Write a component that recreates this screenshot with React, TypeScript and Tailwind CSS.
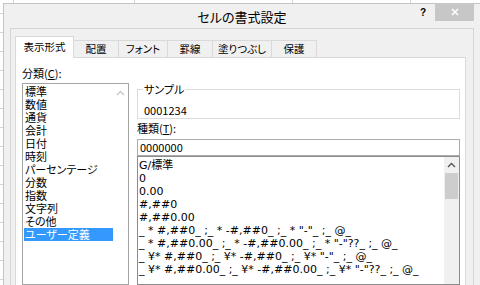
import React from "react";

const categories = [
  "標準",
  "数値",
  "通貨",
  "会計",
  "日付",
  "時刻",
  "パーセンテージ",
  "分数",
  "指数",
  "文字列",
  "その他",
  "ユーザー定義",
];

const formats = [
  "G/標準",
  "0",
  "0.00",
  "#,##0",
  "#,##0.00",
  '_ * #,##0_ ;_ * -#,##0_ ;_ * "-"_ ;_ @_',
  '_ * #,##0.00_ ;_ * -#,##0.00_ ;_ * "-"??_ ;_ @_',
  '_ ¥* #,##0_ ;_ ¥* -#,##0_ ;_ ¥* "-"_ ;_ @_',
  '_ ¥* #,##0.00_ ;_ ¥* -#,##0.00_ ;_ ¥* "-"??_ ;_ @_',
];

function ChevronUp({ color }: { color: string }) {
  return (
    <svg width="9" height="6" viewBox="0 0 9 6">
      <path d="M1 5 L4.5 1.5 L8 5" fill="none" stroke={color} strokeWidth="1.4" />
    </svg>
  );
}

const tabs = [
  { label: "配置", w: "w-[45px]" },
  { label: "フォント", w: "w-[49px]" },
  { label: "罫線", w: "w-[45px]" },
  { label: "塗りつぶし", w: "w-[59px]" },
  { label: "保護", w: "w-[45px]" },
];

export default function App() {
  const sheetRows = Array.from({ length: 15 });
  return (
    <div className="w-[480px] h-[285px] overflow-hidden bg-white flex flex-col text-black font-['Noto_Sans_CJK_JP',sans-serif] [font-feature-settings:'palt']">
      {/* sheet behind, top strip */}
      <div className="h-[3px] shrink-0 flex">
        <div className="w-[14px] border-r border-[#d4d4d4]" />
        <div className="w-[121px] border-r border-[#d4d4d4]" />
        <div className="w-[158px] border-r border-[#d4d4d4]" />
        <div className="w-[118px] border-r border-[#d4d4d4]" />
      </div>
      <div className="flex flex-1 min-h-0">
        {/* sheet behind, left strip */}
        <div className="w-[3px] shrink-0 flex flex-col">
          <div className="h-[11px] shrink-0 border-b border-[#d4d4d4]" />
          {sheetRows.map((_, i) => (
            <div key={i} className="h-[19px] shrink-0 border-b border-[#d4d4d4]" />
          ))}
        </div>

        {/* dialog */}
        <div className="flex-1 flex flex-col bg-[#f0f0f0] border-l border-t border-[#c4c4c4]">
          {/* title bar */}
          <div className="h-[24px] shrink-0 grid grid-cols-[1fr_auto_1fr]">
            <div />
            <div className="text-[13px] leading-[24px] pt-[1px] text-black">セルの書式設定</div>
            <div className="flex justify-end items-start pr-[6px]">
              <span className="font-['Liberation_Sans',sans-serif] font-bold text-[10px] leading-[12px] mt-[3px] mr-[9px]">?</span>
              <div className="w-[39px] h-[18px] -mt-[1px] bg-[#c7c7c7] flex items-center justify-center">
                <svg width="8" height="8" viewBox="0 0 8 8">
                  <path d="M1 1 L7 7 M7 1 L1 7" stroke="white" strokeWidth="1.5" />
                </svg>
              </div>
            </div>
          </div>

          {/* client area */}
          <div className="flex-1 min-h-0 ml-[6px] mr-[6px] border-l border-t border-r border-[#d5d5d5] pt-[7px] pl-[4px] pr-[7px] flex flex-col">
            {/* tabs */}
            <div className="flex items-end h-[21px] shrink-0 relative z-10 text-[10.5px]">
              <div className="w-[59px] h-[22px] -mb-[1px] bg-white border-l border-t border-r border-[#d9d9d9] flex items-center justify-center pb-[2px]">
                表示形式
              </div>
              {tabs.map((t) => (
                <div
                  key={t.label}
                  className={`${t.w} h-[17px] bg-[#f0f0f0] border-t border-r border-[#d9d9d9] flex items-center justify-center`}
                >
                  {t.label}
                </div>
              ))}
            </div>

            {/* tab panel */}
            <div className="flex-1 min-h-0 bg-white border-l border-t border-r border-[#d9d9d9] flex pl-[6px] pr-[5px] text-[11px]">
              {/* left column */}
              <div className="w-[107px] shrink-0 flex flex-col pt-[9px]">
                <div className="h-[13px] leading-[13px] mb-[3px]">
                  分類(<span className="underline">C</span>):
                </div>
                <div className="h-[220px] border border-[#a5a5a5] flex">
                  <div className="flex-1 pt-[1px] pl-[1px] flex flex-col">
                    {categories.map((c) => (
                      <div
                        key={c}
                        className={`h-[13px] leading-[13px] pl-[1px] whitespace-nowrap ${
                          c === "ユーザー定義" ? "bg-[#3399ff] text-white" : ""
                        }`}
                      >
                        {c}
                      </div>
                    ))}
                  </div>
                  <div className="w-[15px] shrink-0 flex flex-col">
                    <div className="h-[17px] flex items-center justify-center">
                      <ChevronUp color="#c8c8c8" />
                    </div>
                  </div>
                </div>
              </div>

              {/* right column */}
              <div className="w-[323px] ml-[8px] shrink-0 flex flex-col">
                <div className="mt-[31px] h-[34px] border border-[#dcdcdc] relative pt-[14px] pl-[6px]">
                  <span className="absolute -top-[7px] left-[5px] px-[1px] bg-white leading-[13px]">サンプル</span>
                  <div className="leading-[13px]">0001234</div>
                </div>
                <div className="mt-[3px] h-[13px] leading-[13px] mb-[4px]">
                  種類(<span className="underline">T</span>):
                </div>
                <div className="h-[20px] border border-[#ababab] flex items-center pl-[2px] leading-[13px]">
                  0000000
                </div>
                <div className="h-[160px] border border-[#8c8c8c] flex">
                  <div className="flex-1 min-w-0 pt-[2px] pl-[1px] flex flex-col font-['DejaVu_Sans','Noto_Sans_CJK_JP',sans-serif] text-[11px]">
                    {formats.map((f) => (
                      <div key={f} className="h-[13px] leading-[13px] whitespace-pre">
                        {f}
                      </div>
                    ))}
                  </div>
                  <div className="w-[15px] shrink-0 bg-[#f0f0f0] flex flex-col">
                    <div className="h-[16px] flex items-center justify-center">
                      <ChevronUp color="#555555" />
                    </div>
                    <div className="mx-[1px] h-[26px] bg-[#cdcdcd]" />
                  </div>
                </div>
              </div>
            </div>
          </div>
        </div>
      </div>
    </div>
  );
}
